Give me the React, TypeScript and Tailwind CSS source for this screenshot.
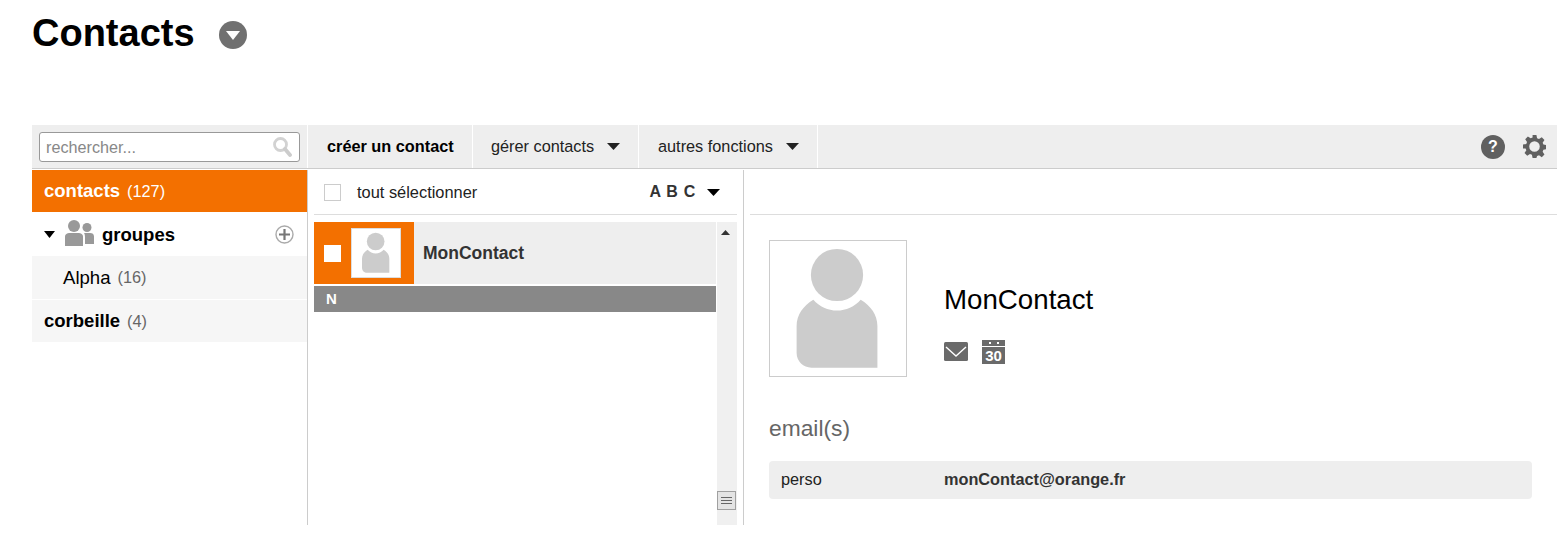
const Caret = ({ className = '', width = 13 }: { className?: string; width?: number }) => (
  <svg width={width} height="7" viewBox="0 0 13 7" preserveAspectRatio="none" className={className}>
    <path d="M0 0h13L6.5 7z" fill="currentColor" />
  </svg>
)

const Silhouette = ({ size }: { size: number }) => (
  <svg width={size} height={size} viewBox="0 0 138 137">
    <circle cx="68" cy="34" r="26.5" fill="#cccccc" />
    <path
      d="M44 59c6 7 15 11 24 11s18-4 24-11c10 6 17 15 17 27v42H42c-8 0-15-6-15-15V86c0-12 7-21 17-27z"
      fill="#cccccc"
    />
  </svg>
)

const groupIcon = (
  <svg width="29" height="26" viewBox="0 0 29 26">
    <circle cx="9" cy="6" r="6" fill="#999" />
    <circle cx="22" cy="7.5" r="4.5" fill="#999" />
    <path d="M0 26v-9c0-3 2-4 5-4h8c3 0 5 1 5 4v9z" fill="#999" />
    <path d="M19 13h6c2.500 0 4 1 4 3.500V24h-9v-7c0-1.500-.3-3-1-4z" fill="#999" />
  </svg>
)

export default function App() {
  return (
    <div className="w-[1565px] h-[540px] overflow-hidden bg-white pl-8 pr-2 text-black font-['Liberation_Sans',Arial,sans-serif]">
      {/* Title */}
      <div className="h-[125px] pt-3 flex items-start gap-[24px]">
        <h1 className="text-[38px] leading-[42px] font-bold">Contacts</h1>
        <div className="mt-[9px] w-7 h-7 rounded-full bg-[#707070] flex items-center justify-center">
          <svg width="14" height="9" viewBox="0 0 14 9">
            <path d="M0 0h14L7 9z" fill="#fff" />
          </svg>
        </div>
      </div>

      {/* Toolbar */}
      <div className="h-11 flex bg-[#eeeeee] border-b border-[#cccccc] text-[16.3px]">
        <div className="w-[275px] px-[7px] pt-[7px]">
          <div className="h-[30px] bg-white border border-[#999999] rounded-[3px] flex items-center justify-between pl-[6px] pr-[7px]">
            <span className="text-[#888888] text-[16.2px]">rechercher...</span>
            <svg width="19" height="20" viewBox="0 0 19 20" fill="none">
              <circle cx="7.5" cy="7.5" r="6" stroke="#d2d2d2" strokeWidth="2.8" />
              <path d="M12 12l5 6" stroke="#cccccc" strokeWidth="3.8" strokeLinecap="round" />
            </svg>
          </div>
        </div>
        <div className="flex border-l border-white">
          <div className="w-[165px] pl-[19px] flex items-center font-bold border-r border-white">créer un contact</div>
          <div className="w-[166px] pl-[18px] flex items-center gap-[13px] border-r border-white text-[#222222]">
            gérer contacts <Caret />
          </div>
          <div className="w-[179px] pl-[19px] flex items-center gap-[13px] border-r border-white text-[#222222]">
            autres fonctions <Caret />
          </div>
        </div>
        <div className="flex-1 flex items-center justify-end gap-[18px] pr-[11px]">
          <div className="w-6 h-6 rounded-full bg-[#606060] text-white text-[16px] font-bold flex items-center justify-center">?</div>
          <svg width="23" height="23" viewBox="0 0 24 24" fill="#606060">
            <path
              fillRule="evenodd"
              d="M10 0h4l.7 3.4 2 .8 2.9-1.900 2.800 2.800-1.900 2.900.8 2 3.400.7v4l-3.400.7-.8 2 1.900 2.900-2.800 2.800-2.900-1.900-2 .8L14 24h-4l-.7-3.400-2-.8-2.900 1.900-2.800-2.800 1.900-2.900-.8-2L0 14v-4l3.400-.7.8-2-1.900-2.900 2.800-2.800 2.900 1.900 2-.8zM12 6.500a5.500 5.500 0 1 0 0 11 5.500 5.500 0 0 0 0-11z"
            />
          </svg>
        </div>
      </div>

      {/* Body */}
      <div className="h-[356px] flex pt-px">
        {/* Sidebar */}
        <div className="w-[276px] border-r border-[#cccccc]">
          <div className="h-[42px] bg-[#f37000] text-white flex items-center pl-3 gap-[7px]">
            <b className="text-[18.5px]">contacts</b>
            <span className="text-[16.3px]">(127)</span>
          </div>
          <div className="h-11 flex items-center pl-3 pr-[13px]">
            <Caret width={11} />
            <div className="ml-[10px] mr-[8px] mb-[2px]">{groupIcon}</div>
            <b className="text-[18.5px] flex-1 pt-px">groupes</b>
            <svg width="19" height="19" viewBox="0 0 19 19" fill="none">
              <circle cx="9.5" cy="9.5" r="8.5" stroke="#aaaaaa" strokeWidth="1.4" />
              <path d="M9.5 4v11M4 9.5h11" stroke="#777777" strokeWidth="2.2" />
            </svg>
          </div>
          <div className="h-[43px] bg-[#f6f6f6] border-b border-white flex items-center pl-[31px] gap-[7px] box-content">
            <span className="text-[18.6px]">Alpha</span>
            <span className="text-[16.3px] text-[#666666]">(16)</span>
          </div>
          <div className="h-[42px] bg-[#f6f6f6] flex items-center pl-3 gap-[7px]">
            <b className="text-[18.5px]">corbeille</b>
            <span className="text-[16.3px] text-[#666666]">(4)</span>
          </div>
        </div>

        {/* Contact list */}
        <div className="w-[436px] border-r border-[#cccccc] pl-[6px] pr-[6px]">
          <div className="h-[45px] border-b border-[#dddddd] flex items-center pl-[10px] pr-[17px]">
            <div className="w-[17px] h-[17px] border border-[#cccccc]" />
            <span className="ml-4 pt-px text-[16.4px] text-[#222222] flex-1">tout sélectionner</span>
            <b className="text-[16px] text-[#333333] tracking-[0.7px]">A B C</b>
            <Caret className="ml-[11px]" />
          </div>
          <div className="mt-[7px] flex h-[303px]">
            <div className="w-[402px]">
              <div className="h-[62px] flex bg-[#eeeeee]">
                <div className="w-[100px] bg-[#f37000] flex items-center pl-[10px]">
                  <div className="w-[17px] h-[17px] bg-white" />
                  <div className="ml-[10px] w-[50px] h-[50px] bg-white border border-[#dddddd] flex items-center justify-center">
                    <Silhouette size={46} />
                  </div>
                </div>
                <b className="ml-[9px] self-center text-[17.5px] text-[#333333]">MonContact</b>
              </div>
              <div className="mt-[2px] h-[26px] bg-[#888888] text-white font-bold text-[15px] pl-3 flex items-center">N</div>
            </div>
            <div className="ml-px w-5 bg-[#f0f0f0] flex flex-col justify-between items-start pb-[15px]">
              <svg width="9" height="5" viewBox="0 0 9 5" className="ml-[4px] mt-[8px]">
                <path d="M4.500 0L9 5H0z" fill="#333333" />
              </svg>
              <div className="w-[19px] h-[19px] bg-[#e4e4e4] border border-[#a0a0a0] flex flex-col items-center justify-center gap-[2px]">
                <i className="block w-[11px] h-px bg-[#666666]" />
                <i className="block w-[11px] h-px bg-[#666666]" />
                <i className="block w-[11px] h-px bg-[#666666]" />
              </div>
            </div>
          </div>
        </div>

        {/* Detail */}
        <div className="flex-1 pl-[6px]">
          <div className="h-[45px] border-b border-[#dddddd]" />
          <div className="pl-[19px] pr-[25px] pt-[25px]">
            <div className="flex">
              <div className="w-[138px] h-[137px] border border-[#cccccc] flex items-center justify-center">
                <Silhouette size={136} />
              </div>
              <div className="ml-[37px] pt-[42px]">
                <div className="text-[27.700px] leading-[36px]">MonContact</div>
                <div className="mt-[21px] flex items-start gap-[14px]">
                  <svg width="24" height="19" viewBox="0 0 24 19" className="mt-[3px]">
                    <rect width="24" height="19" rx="1.500" fill="#6a6a6a" />
                    <path d="M2 5l10 9 10-9" stroke="#fff" strokeWidth="1.400" fill="none" />
                  </svg>
                  {/* calendar: header strip with two rings, day number below */}
                  <div className="w-[23px] h-[25px] flex flex-col gap-px">
                    <div className="h-[6px] mt-px bg-[#6a6a6a] flex justify-center items-center gap-[6px]">
                      <i className="block w-[2px] h-[2px] bg-white" />
                      <i className="block w-[2px] h-[2px] bg-white" />
                    </div>
                    <div className="flex-1 bg-[#6a6a6a] text-white font-bold text-[15px] leading-[17px] text-center">30</div>
                  </div>
                </div>
              </div>
            </div>
            <div className="mt-[37px] text-[22.800px] leading-[28px] text-[#666666]">email(s)</div>
            <div className="mt-[19px] h-[38px] bg-[#eeeeee] rounded-[4px] flex items-center pl-3 pb-px text-[16.300px]">
              <span className="w-[163px] text-[#222222]">perso</span>
              <b className="text-[#333333]">monContact@orange.fr</b>
            </div>
          </div>
        </div>
      </div>
    </div>
  )
}
